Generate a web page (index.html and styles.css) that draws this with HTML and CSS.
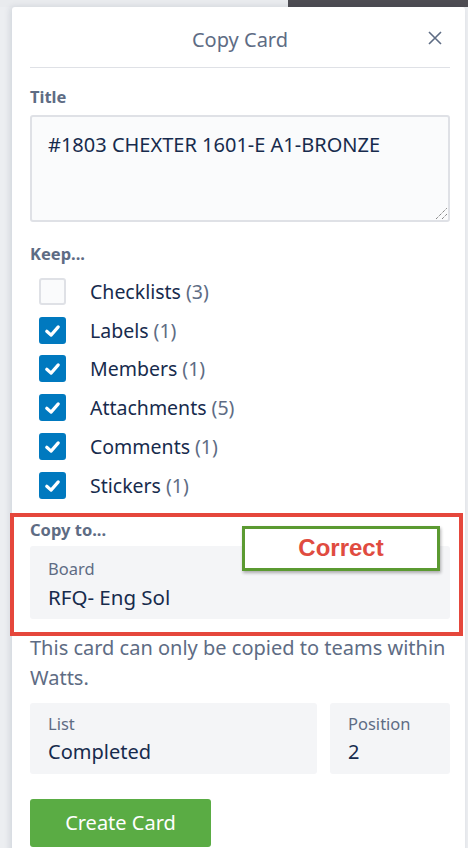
FILE: index.html
```html
<!DOCTYPE html>
<html>
<head>
  <meta charset="UTF-8">
  <title>Copy Card</title>
  <link rel="stylesheet" href="styles.css">
</head>
<body>
  <div class="topbar">
    <div class="topbar-light"></div>
    <div class="topbar-dark"></div>
  </div>

  <div class="popover">
    <div class="pop-header">
      <span class="pop-title">Copy Card</span>
      <span class="pop-close">
        <svg width="16" height="16" viewBox="0 0 16 16"><path d="M2 2 L14 14 M14 2 L2 14" /></svg>
      </span>
    </div>

    <div class="label">Title</div>
    <div class="textarea">#1803 CHEXTER 1601-E A1-BRONZE
      <svg class="grip" width="14" height="14" viewBox="0 0 14 14"><path d="M2 13 L13 2 M8 13 L13 8" /></svg>
    </div>

    <div class="label keep">Keep...</div>
    <ul class="checks">
      <li><span class="box"></span>Checklists <span class="count">(3)</span></li>
      <li><span class="box on"><svg viewBox="0 0 16 16"><path d="M4 8.5 L7 11.2 L12 5.5" /></svg></span>Labels <span class="count">(1)</span></li>
      <li><span class="box on"><svg viewBox="0 0 16 16"><path d="M4 8.5 L7 11.2 L12 5.5" /></svg></span>Members <span class="count">(1)</span></li>
      <li><span class="box on"><svg viewBox="0 0 16 16"><path d="M4 8.5 L7 11.2 L12 5.5" /></svg></span>Attachments <span class="count">(5)</span></li>
      <li><span class="box on"><svg viewBox="0 0 16 16"><path d="M4 8.5 L7 11.2 L12 5.5" /></svg></span>Comments <span class="count">(1)</span></li>
      <li><span class="box on"><svg viewBox="0 0 16 16"><path d="M4 8.5 L7 11.2 L12 5.5" /></svg></span>Stickers <span class="count">(1)</span></li>
    </ul>

    <div class="annotate">
      <div class="label">Copy to...</div>
      <div class="select">
        <div class="sel-label">Board</div>
        <div class="sel-value">RFQ- Eng Sol</div>
      </div>
      <div class="correct">Correct</div>
    </div>

    <p class="note">This card can only be copied to teams within Watts.</p>

    <div class="row">
      <div class="select list">
        <div class="sel-label">List</div>
        <div class="sel-value">Completed</div>
      </div>
      <div class="select pos">
        <div class="sel-label">Position</div>
        <div class="sel-value">2</div>
      </div>
    </div>

    <button class="create">Create Card</button>
  </div>
</body>
</html>
```

FILE: styles.css
```css
html, body {
  margin: 0;
  height: 100%;
  overflow: hidden;
}
body {
  background: #eceef1;
  font-family: "Noto Sans", "Open Sans", sans-serif;
  color: #172b4d;
}

.topbar { display: flex; height: 7px; }
.topbar-light { width: 288px; background: #e9ebee; }
.topbar-dark { flex: 1; background: #4e4d53; }

.popover {
  position: relative;
  margin-left: 12px;
  width: 420px;
  padding: 0 15px 40px 18px;
  background: #fff;
  border-radius: 3px 3px 0 0;
  box-shadow: -2px 0 6px rgba(9, 30, 66, 0.12);
}

.pop-header {
  position: relative;
  height: 60px;
  border-bottom: 1px solid #dfe1e6;
  display: flex;
  align-items: center;
  justify-content: center;
}
.pop-title { font-size: 20px; color: #5e6c84; margin-top: 4px; }
.pop-close { position: absolute; right: 7px; top: 23px; }
.pop-close svg { display: block; stroke: #5e6c84; stroke-width: 1.6; fill: none; }

.label {
  font-size: 16.5px;
  font-weight: bold;
  color: #5e6c84;
  line-height: 20px;
}
.pop-header + .label { margin-top: 19px; }

.textarea {
  position: relative;
  margin-top: 8px;
  height: 75px;
  padding: 15px 16px 13px;
  background: #fafbfc;
  border: 2px solid #dfe1e6;
  border-radius: 3px;
  font-size: 20px;
  line-height: 26px;
}
.grip { position: absolute; right: 0; bottom: 0; stroke: #555; stroke-width: 1; fill: none; stroke-dasharray: 1 1; }

.keep { margin-top: 22px; }

.checks { list-style: none; margin: 8px 0 0; padding: 0; }
.checks li {
  display: flex;
  align-items: center;
  height: 38.8px;
  font-size: 19.5px;
  color: #172b4d;
}
.count { color: #5e6c84; margin-left: 5px; }
.box {
  width: 23px;
  height: 23px;
  margin: 0 24px 0 9px;
  background: #fafbfc;
  border: 2px solid #dfe1e6;
  border-radius: 3px;
}
.box.on { background: #0079bf; border-color: #0079bf; }
.box svg { display: block; width: 23px; height: 23px; fill: none; stroke: #fff; stroke-width: 2.2; stroke-linecap: round; stroke-linejoin: round; }

.annotate {
  position: relative;
  margin: 8px -13px 0 -20px;
  padding: 3px 9px 13px 16px;
  border: 4px solid #e5473c;
}

.select {
  margin-top: 6px;
  padding: 12px 18px 8px;
  background: #f4f5f7;
  border-radius: 3px;
}
.sel-label { font-size: 16.5px; color: #5e6c84; line-height: 22px; }
.sel-value { font-size: 20.5px; color: #172b4d; line-height: 28px; margin-top: 3px; }

.correct {
  position: absolute;
  left: 228px;
  top: 9px;
  width: 192px;
  height: 39px;
  border: 3px solid #5b9a31;
  background: #fff;
  box-shadow: 1px 2px 3px rgba(0, 0, 0, 0.3);
  font-family: "Liberation Sans", Arial, sans-serif;
  font-weight: bold;
  font-size: 24px;
  color: #e04b40;
  display: flex;
  align-items: center;
  justify-content: center;
}

.note {
  margin: -3px 0 0;
  font-size: 20px;
  line-height: 30px;
  color: #5e6c84;
}

.row { display: flex; gap: 13px; margin-top: 10px; }
.row .select { margin-top: 0; height: 53px; padding-top: 10px; padding-bottom: 8px; }
.row .sel-value { font-size: 20px; }
.list { flex: 1; }
.pos { width: 84px; }

.create {
  margin-top: 25px;
  width: 181px;
  height: 48px;
  border: none;
  border-radius: 3px;
  background: #5aac44;
  color: #fff;
  font-family: inherit;
  font-size: 20px;
}
```
